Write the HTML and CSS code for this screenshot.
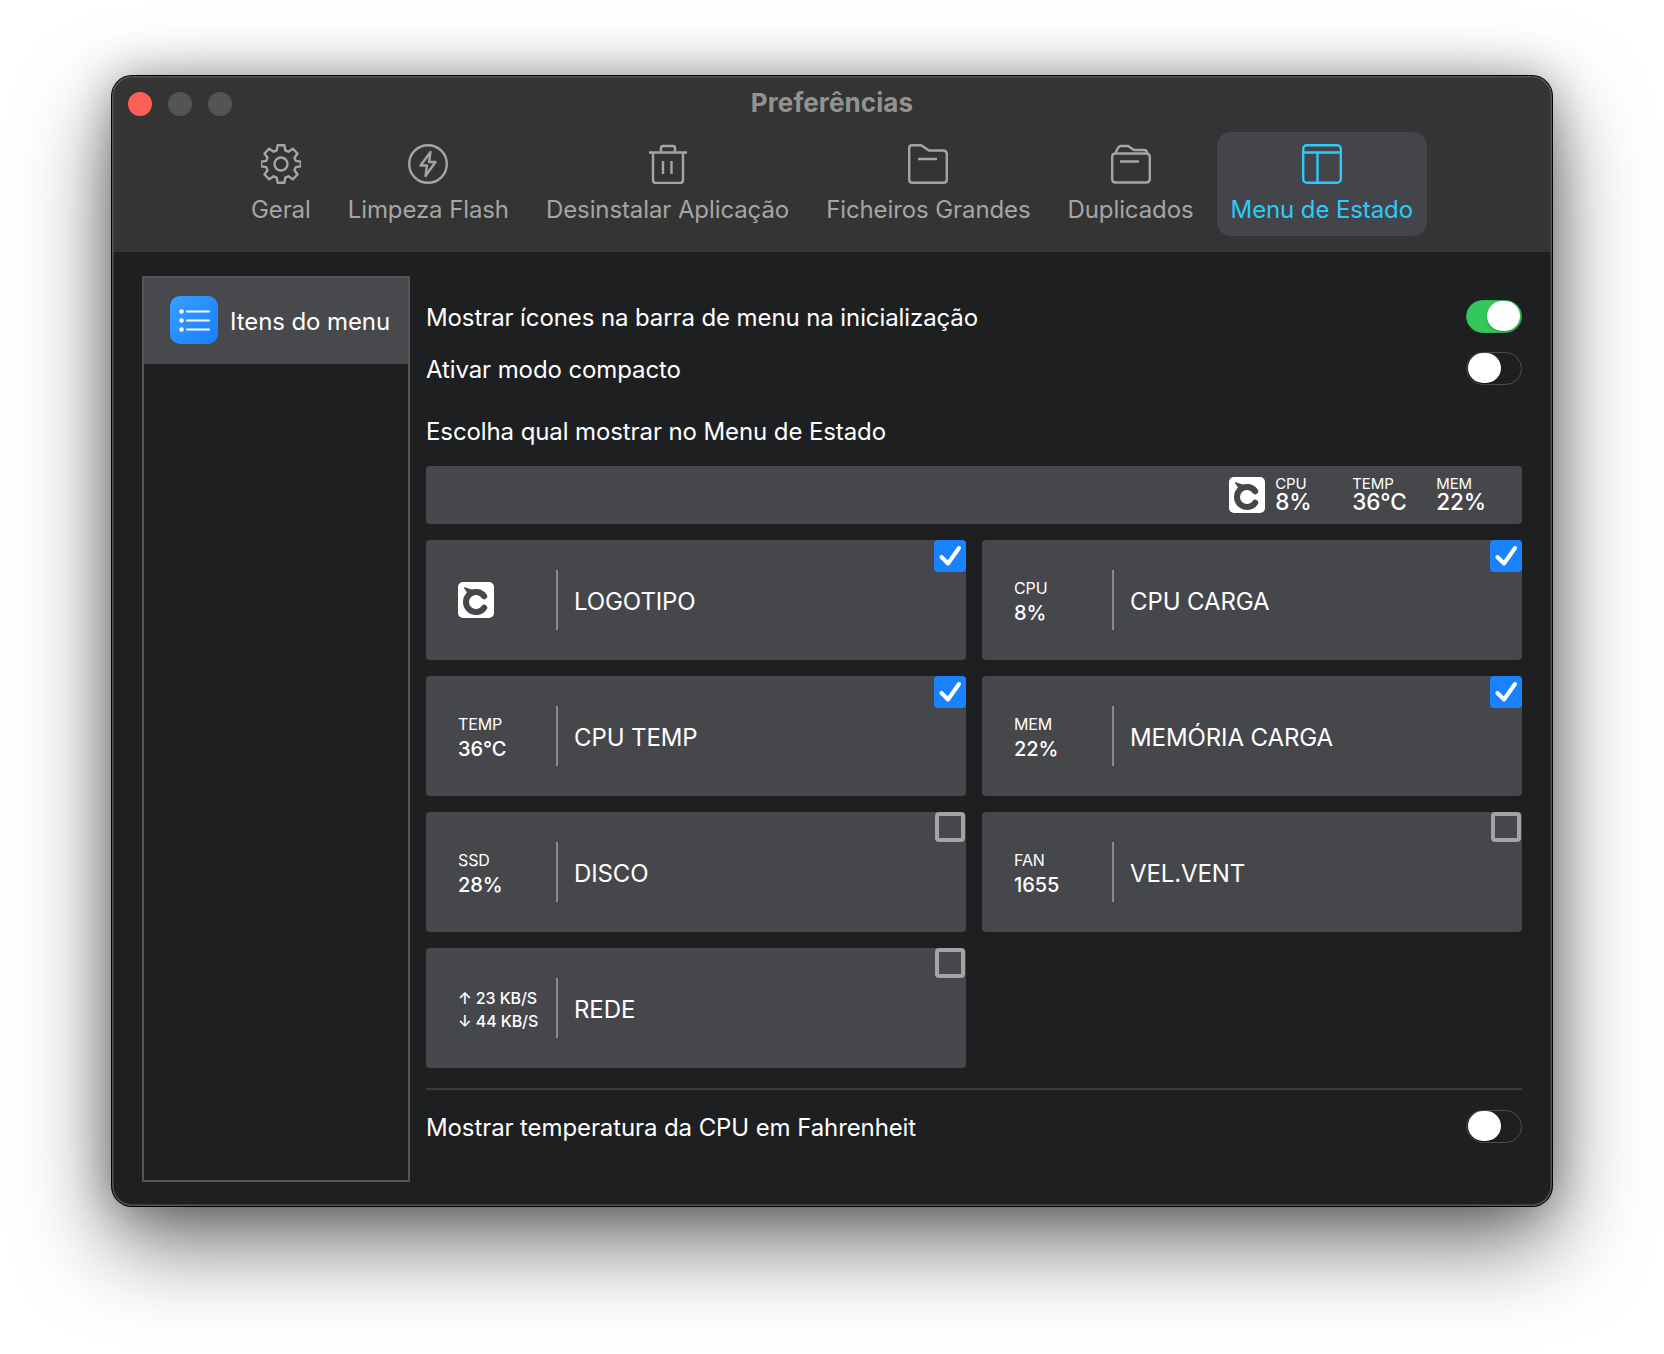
FILE: index.html
```html
<!DOCTYPE html>
<html lang="pt">
<head>
    <meta charset="UTF-8">
    <title>Preferências</title>
    <link rel="stylesheet" href="styles.css">
</head>
<body>
    <svg width="0" height="0" class="defs">
        <symbol id="logo" viewBox="0 0 36 36">
            <rect width="36" height="36" rx="5" fill="#fff"/>
            <path d="M26.2 14.3 A10 10 0 1 0 26.2 25.7" fill="none" stroke="#46474b" stroke-width="6" stroke-linecap="round"/>
            <path d="M6 6.2 Q5.6 4.8 7.5 5.4 L15 8 L10 12.5 Q8.5 9 6 6.2 Z" fill="#46474b"/>
        </symbol>
        <symbol id="check" viewBox="0 0 32 32">
            <path d="M7.5 17 L14 23.5 L25 8" fill="none" stroke="#fff" stroke-width="4" stroke-linecap="round" stroke-linejoin="round"/>
        </symbol>
    </svg>

    <div class="window">
        <header class="titlebar">
            <div class="lights">
                <span class="light red"></span>
                <span class="light"></span>
                <span class="light"></span>
            </div>
            <h1 class="title">Preferências</h1>
            <nav class="tabs">
                <a class="tab">
                    <svg class="tab-icon" viewBox="0 0 40 40">
                        <circle cx="20" cy="20" r="6.5"/>
                        <path d="M16.6 1.2h6.8l.9 5.2 3.1 1.3 4.3-3 4.8 4.8-3 4.3 1.3 3.1 5.2.9v4.4l-5.2.9-1.3 3.1 3 4.3-4.8 4.8-4.3-3-3.1 1.3-.9 5.2h-6.8l-.9-5.2-3.1-1.3-4.3 3-4.8-4.8 3-4.3-1.3-3.1-5.2-.9v-4.4l5.2-.9 1.3-3.1-3-4.3 4.8-4.8 4.3 3 3.1-1.3z" stroke-linejoin="round"/>
                    </svg>
                    <span>Geral</span>
                </a>
                <a class="tab">
                    <svg class="tab-icon" viewBox="0 0 40 40">
                        <circle cx="20" cy="20" r="18.8"/>
                        <path d="M22.5 8 L12.5 21.5 H19 L17.5 32 L27.5 18 H21 Z" stroke-linejoin="round"/>
                    </svg>
                    <span>Limpeza Flash</span>
                </a>
                <a class="tab">
                    <svg class="tab-icon" viewBox="0 0 40 40">
                        <path d="M5 9 V36 Q5 39 8 39 H32 Q35 39 35 36 V9"/>
                        <path d="M1 8.5 H39"/>
                        <path d="M13 8.5 V4 Q13 2 15 2 H25 Q27 2 27 4 V8.5"/>
                        <path d="M15 17 V30 M23.5 17 V30"/>
                    </svg>
                    <span>Desinstalar Aplicação</span>
                </a>
                <a class="tab">
                    <svg class="tab-icon" viewBox="0 0 40 40">
                        <path d="M1.2 4 Q1.2 1.2 4 1.2 H13 L21 6.5 H35 Q38.8 6.5 38.8 10.5 V35.5 Q38.8 38.8 35.5 38.8 H4.5 Q1.2 38.8 1.2 35.5 Z"/>
                        <path d="M10 15 H29"/>
                    </svg>
                    <span>Ficheiros Grandes</span>
                </a>
                <a class="tab">
                    <svg class="tab-icon" viewBox="0 0 40 40">
                        <path d="M1.2 13 Q1.2 9.5 4.5 9.5 H35 Q38.8 9.5 38.8 13 V35 Q38.8 38.5 35 38.5 H4.5 Q1.2 38.5 1.2 35 Z"/>
                        <path d="M4.5 9 L7 4 Q8 2 10 2 H17 L23 6 H33 Q36 6 36 9"/>
                        <path d="M9 17.5 H28"/>
                    </svg>
                    <span>Duplicados</span>
                </a>
                <a class="tab active">
                    <svg class="tab-icon" viewBox="0 0 40 40">
                        <rect x="1.2" y="1.2" width="37.6" height="37.6" rx="3.5"/>
                        <path d="M1.2 8.5 H38.8 M15.5 8.5 V38.8"/>
                    </svg>
                    <span>Menu de Estado</span>
                </a>
            </nav>
        </header>

        <main class="body">
            <aside class="sidebar">
                <div class="side-item">
                    <span class="side-icon">
                        <svg viewBox="0 0 48 48" width="48" height="48">
                            <circle cx="11.5" cy="15.5" r="2.2"/>
                            <circle cx="11.5" cy="24.5" r="2.2"/>
                            <circle cx="11.5" cy="33.5" r="2.2"/>
                            <rect x="16" y="14.5" width="24" height="2" rx="1"/>
                            <rect x="16" y="23.5" width="24" height="2" rx="1"/>
                            <rect x="16" y="32.5" width="24" height="2" rx="1"/>
                        </svg>
                    </span>
                    <span>Itens do menu</span>
                </div>
            </aside>

            <section class="content">
                <div class="option">
                    <span>Mostrar ícones na barra de menu na inicialização</span>
                    <span class="switch on"></span>
                </div>
                <div class="option">
                    <span>Ativar modo compacto</span>
                    <span class="switch"></span>
                </div>
                <p class="choose">Escolha qual mostrar no Menu de Estado</p>

                <div class="statusbar">
                    <svg class="logo"><use href="#logo"/></svg>
                    <div class="stat stat-cpu"><small>CPU</small><b>8%</b></div>
                    <div class="stat stat-temp"><small>TEMP</small><b>36°C</b></div>
                    <div class="stat"><small>MEM</small><b>22%</b></div>
                </div>

                <div class="cards">
                    <div class="card">
                        <div class="preview"><svg class="logo"><use href="#logo"/></svg></div>
                        <div class="card-name">LOGOTIPO</div>
                        <span class="box checked"><svg viewBox="0 0 32 32"><use href="#check"/></svg></span>
                    </div>
                    <div class="card">
                        <div class="preview"><small>CPU</small><b>8%</b></div>
                        <div class="card-name">CPU CARGA</div>
                        <span class="box checked"><svg viewBox="0 0 32 32"><use href="#check"/></svg></span>
                    </div>
                    <div class="card">
                        <div class="preview"><small>TEMP</small><b>36°C</b></div>
                        <div class="card-name">CPU TEMP</div>
                        <span class="box checked"><svg viewBox="0 0 32 32"><use href="#check"/></svg></span>
                    </div>
                    <div class="card">
                        <div class="preview"><small>MEM</small><b>22%</b></div>
                        <div class="card-name">MEMÓRIA CARGA</div>
                        <span class="box checked"><svg viewBox="0 0 32 32"><use href="#check"/></svg></span>
                    </div>
                    <div class="card">
                        <div class="preview"><small>SSD</small><b>28%</b></div>
                        <div class="card-name">DISCO</div>
                        <span class="box"></span>
                    </div>
                    <div class="card">
                        <div class="preview"><small>FAN</small><b>1655</b></div>
                        <div class="card-name">VEL.VENT</div>
                        <span class="box"></span>
                    </div>
                    <div class="card">
                        <div class="preview net"><small>↑ 23 KB/S</small><small>↓ 44 KB/S</small></div>
                        <div class="card-name">REDE</div>
                        <span class="box"></span>
                    </div>
                </div>

                <div class="option last">
                    <span>Mostrar temperatura da CPU em Fahrenheit</span>
                    <span class="switch"></span>
                </div>
            </section>
        </main>
    </div>
</body>
</html>
```

FILE: styles.css
```css
* {
    margin: 0;
    padding: 0;
    box-sizing: border-box;
}

body {
    width: 1664px;
    height: 1354px;
    padding: 76px 112px 0;
    background-color: #fff;
    font-family: 'Inter', 'Liberation Sans', sans-serif;
    overflow: hidden;
}

.defs {
    position: absolute;
}

.window {
    width: 1440px;
    height: 1130px;
    border-radius: 20px;
    overflow: hidden;
    background-color: #1e1f21;
    box-shadow: 0 0 0 1px #000, 0 36px 90px rgba(0,0,0,0.58), 0 0 44px rgba(0,0,0,0.3);
    display: flex;
    flex-direction: column;
    position: relative;
}

.window::after {
    content: "";
    position: absolute;
    inset: 0;
    border-radius: 20px;
    box-shadow: inset 0 0 0 1.5px #555;
    pointer-events: none;
}

/* 标题栏 */
.titlebar {
    height: 176px;
    background-color: #343434;
    position: relative;
    flex: none;
}

.lights {
    position: absolute;
    left: 16px;
    top: 16px;
    display: flex;
    gap: 16px;
}

.light {
    width: 24px;
    height: 24px;
    border-radius: 50%;
    background-color: #545454;
}

.light.red {
    background-color: #ff5f57;
}

.title {
    text-align: center;
    font-size: 26px;
    line-height: 32px;
    font-weight: 700;
    color: #929292;
    padding-top: 11px;
    letter-spacing: 0.1px;
}

.tabs {
    position: absolute;
    left: 0;
    right: 0;
    top: 56px;
    display: flex;
    justify-content: center;
    gap: 9px;
}

.tab {
    height: 104px;
    padding: 12px 14px 0;
    border-radius: 14px;
    display: flex;
    flex-direction: column;
    align-items: center;
    gap: 11px;
    font-size: 24px;
    line-height: 29px;
    letter-spacing: -0.1px;
    color: #a5a5a5;
    white-space: nowrap;
}

.tab-icon {
    width: 40px;
    height: 40px;
    fill: none;
    stroke: #a5a5a5;
    stroke-width: 2.4;
}

.tab.active {
    background-color: #44454a;
    color: #2acbfb;
}

.tab.active .tab-icon {
    stroke: #2acbfb;
}

/* 主体 */
.body {
    flex: 1;
    display: flex;
    padding: 24px 30px 24px;
    gap: 16px;
}

.sidebar {
    width: 268px;
    flex: none;
    border: 2px solid #555;
}

.side-item {
    height: 86px;
    padding: 18px 0 0 26px;
    background-color: #48494d;
    display: flex;
    align-items: flex-start;
    gap: 12px;
    color: #fff;
    font-size: 24px;
    line-height: 52px;
    letter-spacing: -0.09px;
    white-space: nowrap;
}

.side-icon {
    width: 48px;
    height: 48px;
    border-radius: 10px;
    background: linear-gradient(135deg, #38a0ff, #1a7dff);
    fill: #fff;
}

.side-icon svg {
    display: block;
}

.content {
    flex: 1;
    color: #fff;
    font-size: 24px;
    letter-spacing: -0.1px;
}

.option {
    height: 52px;
    display: flex;
    justify-content: space-between;
    align-items: center;
}

.option:first-child {
    margin-top: 14px;
    padding-top: 2px;
}

.option:nth-child(2) {
    padding-top: 2px;
}

.switch {
    width: 56px;
    height: 33px;
    border-radius: 17px;
    border: 1.5px solid #4c4d50;
    background-color: #1e1f21;
    position: relative;
    margin-top: -2px;
}

.switch::after {
    content: "";
    position: absolute;
    left: 1px;
    top: 0;
    width: 33px;
    height: 30px;
    border-radius: 15px;
    background-color: #fff;
    box-shadow: 0 1px 2px rgba(0,0,0,0.3);
}

.switch.on {
    background-color: #34c759;
    border-color: #2fb552;
}

.switch.on::after {
    left: 20px;
}

.choose {
    margin-top: 23px;
    line-height: 29px;
    margin-bottom: 20px;
}

.statusbar {
    height: 58px;
    background-color: #46474b;
    border-radius: 4px;
    display: flex;
    justify-content: flex-end;
    align-items: center;
    padding-right: 36px;
}

.logo {
    width: 36px;
    height: 36px;
    display: block;
}

.stat {
    display: flex;
    flex-direction: column;
    padding-bottom: 2px;
}

.stat small {
    font-size: 15px;
    line-height: 16px;
}

.stat b {
    font-size: 22.5px;
    line-height: 20px;
    font-weight: 500;
}

.stat-cpu {
    width: 77px;
    margin-left: 10px;
}

.stat-temp {
    width: 84px;
}

.cards {
    display: grid;
    grid-template-columns: 540px 540px;
    gap: 16px;
    margin-top: 16px;
}

.card {
    height: 120px;
    background-color: #46474b;
    border-radius: 4px;
    padding: 30px 0 0 32px;
    display: flex;
    position: relative;
}

.preview {
    width: 100px;
    height: 60px;
    padding-top: 2px;
    border-right: 2px solid #8a8b8d;
    display: flex;
    flex-direction: column;
    justify-content: center;
    gap: 3px;
}

.preview .logo {
    margin-top: -2px;
}

.preview small {
    font-size: 16px;
    line-height: 20px;
}

.preview b {
    font-size: 20px;
    line-height: 24px;
    font-weight: 500;
}

.preview.net small {
    line-height: 20px;
    font-weight: 500;
    white-space: nowrap;
}

.card-name {
    margin-left: 16px;
    height: 60px;
    line-height: 64px;
    font-size: 24px;
}

.box {
    position: absolute;
    right: 1px;
    top: 0;
    width: 30px;
    height: 30px;
    border-radius: 4px;
    border: 4px solid #a3a3a5;
}

.box.checked {
    right: 0;
    width: 32px;
    height: 32px;
    background-color: #1a82ff;
    border: none;
}

.box svg {
    display: block;
    width: 32px;
    height: 32px;
}

.option.last {
    margin-top: 20px;
    border-top: 2px solid #3a3b3e;
    height: 76px;
}
```
